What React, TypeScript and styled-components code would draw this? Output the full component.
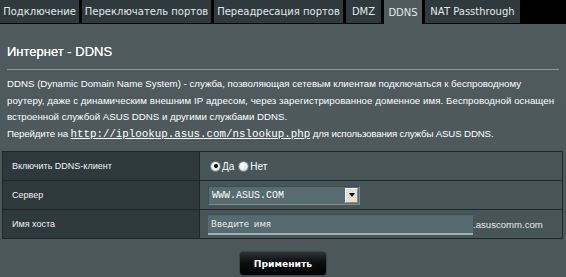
import styled, { createGlobalStyle } from "styled-components";

const GlobalStyle = createGlobalStyle`
    html, body {
        margin: 0;
        padding: 0;
        background: #4d595d;
    }
    * {
        box-sizing: border-box;
    }
`

const StyledPage = styled.div`
    width: 566px;
    height: 277px;
    overflow: hidden;
    background: linear-gradient(180deg, #4f5b5f 0%, #4b575b 100%);
    font-family: "Liberation Sans", Arial, sans-serif;
    color: #fff;
`

const StyledTabBar = styled.ul`
    display: flex;
    gap: 3px;
    height: 24px;
    margin: 0;
    padding: 0;
    list-style: none;
    background-color: #000;
`

const StyledTab = styled.li<{ $width: number; $active?: boolean }>`
    display: flex;
    align-items: center;
    justify-content: center;
    width: ${(p) => p.$width}px;
    height: ${(p) => (p.$active ? 24 : 23)}px;
    font-family: "DejaVu Sans", Verdana, sans-serif;
    font-size: 10px;
    color: #e4e8e9;
    background-color: ${(p) => (p.$active ? "#4f5b5f" : "#2f3a3e")};
    white-space: nowrap;
`

const StyledHeader = styled.div`
    padding: 20px 7px 0 7px;
`

const StyledTitle = styled.div`
    font-size: 13px;
    line-height: 16px;
    color: #fff;
    text-shadow: 0 0 0.3px #fff;
`

const StyledDivider = styled.div`
    height: 1px;
    margin: 9px 0 0 0;
    background-color: #8e999c;
`

const StyledDescription = styled.div`
    margin-top: 6px;
    font-size: 9.7px;
    line-height: 16.6px;
    color: #fff;
    white-space: nowrap;
`

const StyledLine = styled.div<{ $spacing?: number }>`
    letter-spacing: ${(p) => p.$spacing ?? 0}px;

    a {
        color: #fff;
        font-family: "Liberation Mono", "Courier New", monospace;
        font-size: 10.8px;
        letter-spacing: 0;
        text-decoration: underline;
    }
`

const StyledTable = styled.table`
    width: 561px;
    margin: 9px 0 0 2px;
    border-collapse: collapse;
    font-size: 9px;
`

const StyledRow = styled.tr`
    height: 29px;
`

const StyledLabel = styled.th`
    width: 197px;
    padding: 0 0 0 9px;
    text-align: left;
    font-weight: normal;
    color: #f2f2f2;
    background-color: #2e393d;
    border: 1px solid #1f2729;
`

const StyledValue = styled.td`
    padding: 0 0 0 8px;
    background-color: #475458;
    border: 1px solid #1f2729;
`

const StyledRadioGroup = styled.div`
    display: flex;
    align-items: center;
    padding-left: 3px;
    font-size: 10px;
`

const StyledRadio = styled.span<{ $checked?: boolean }>`
    position: relative;
    width: 9px;
    height: 9px;
    margin-right: 2px;
    border-radius: 50%;
    background: radial-gradient(circle at 40% 35%, #ffffff 0%, #e6e6e6 60%, #bdbdbd 100%);
    box-shadow: 0 0 0 1px #6e7b7f;

    &::after {
        content: "";
        display: ${(p) => (p.$checked ? "block" : "none")};
        position: absolute;
        left: 2.5px;
        top: 2.5px;
        width: 4px;
        height: 4px;
        border-radius: 50%;
        background-color: #000;
    }
`

const StyledRadioLabel = styled.span`
    margin-right: 5px;
`

const StyledSelect = styled.div`
    display: flex;
    align-items: center;
    justify-content: space-between;
    width: 152px;
    height: 19px;
    padding: 0 1px 0 3px;
    background-color: #576b71;
    border: 1px solid #7d8c90;
    border-top-color: #3e4c50;
    border-left-color: #3e4c50;
    font-family: "Liberation Mono", "Courier New", monospace;
    font-size: 10px;
    color: #fff;
`

const StyledSelectButton = styled.span`
    display: flex;
    align-items: center;
    justify-content: center;
    width: 13px;
    height: 15px;
    background-color: #e4e0d4;
    border: 1px solid #fff;
    border-right-color: #8d8a80;
    border-bottom-color: #8d8a80;

    &::after {
        content: "";
        border-left: 3px solid transparent;
        border-right: 3px solid transparent;
        border-top: 4px solid #000;
    }
`

const StyledHostWrap = styled.div`
    display: flex;
    align-items: center;
    font-size: 9.6px;
    color: #e8ecec;
`

const StyledInput = styled.div`
    display: flex;
    align-items: center;
    width: 265px;
    height: 21px;
    padding-left: 3px;
    background-color: #566b71;
    border-top: 1px solid #3c4a4e;
    border-bottom: 2px solid #a3afb2;
    font-family: "DejaVu Sans", Verdana, sans-serif;
    font-size: 8.6px;
    word-spacing: 2px;
    color: #e8ecec;
`

const StyledFooter = styled.div`
    display: flex;
    justify-content: center;
    margin-top: 12px;
`

const StyledButton = styled.button`
    width: 88px;
    height: 25px;
    border: 1px solid #3a4346;
    border-radius: 4px;
    background: linear-gradient(180deg, #2f3436 0%, #0c0e0f 45%, #000 100%);
    font-family: "DejaVu Sans", Verdana, sans-serif;
    font-size: 9.2px;
    font-weight: bold;
    color: #fff;
`

const tabs = [
    { label: "Подключение", width: 79 },
    { label: "Переключатель портов", width: 129 },
    { label: "Переадресация портов", width: 129 },
    { label: "DMZ", width: 35 },
    { label: "DDNS", width: 38, active: true },
    { label: "NAT Passthrough", width: 95 },
];

const App = () => {
    return (
        <StyledPage>
            <GlobalStyle />
            <StyledTabBar>
                {tabs.map((t) => (
                    <StyledTab key={t.label} $width={t.width} $active={t.active}>
                        {t.label}
                    </StyledTab>
                ))}
            </StyledTabBar>
            <StyledHeader>
                <StyledTitle>Интернет - DDNS</StyledTitle>
                <StyledDivider />
                <StyledDescription>
                    <StyledLine>
                        DDNS (Dynamic Domain Name System) - служба, позволяющая сетевым клиентам подключаться к беспроводному
                    </StyledLine>
                    <StyledLine $spacing={0.06}>
                        роутеру, даже с динамическим внешним IP адресом, через зарегистрированное доменное имя. Беспроводной оснащен
                    </StyledLine>
                    <StyledLine>встроенной службой ASUS DDNS и другими службами DDNS.</StyledLine>
                    <StyledLine $spacing={-0.15}>
                        Перейдите на <a href="#">http://iplookup.asus.com/nslookup.php</a> для использования службы ASUS DDNS.
                    </StyledLine>
                </StyledDescription>
            </StyledHeader>
            <StyledTable>
                <tbody>
                    <StyledRow>
                        <StyledLabel>Включить DDNS-клиент</StyledLabel>
                        <StyledValue>
                            <StyledRadioGroup>
                                <StyledRadio $checked />
                                <StyledRadioLabel>Да</StyledRadioLabel>
                                <StyledRadio />
                                <StyledRadioLabel>Нет</StyledRadioLabel>
                            </StyledRadioGroup>
                        </StyledValue>
                    </StyledRow>
                    <StyledRow>
                        <StyledLabel>Сервер</StyledLabel>
                        <StyledValue>
                            <StyledSelect>
                                WWW.ASUS.COM
                                <StyledSelectButton />
                            </StyledSelect>
                        </StyledValue>
                    </StyledRow>
                    <StyledRow>
                        <StyledLabel>Имя хоста</StyledLabel>
                        <StyledValue>
                            <StyledHostWrap>
                                <StyledInput>Введите имя</StyledInput>
                                .asuscomm.com
                            </StyledHostWrap>
                        </StyledValue>
                    </StyledRow>
                </tbody>
            </StyledTable>
            <StyledFooter>
                <StyledButton>Применить</StyledButton>
            </StyledFooter>
        </StyledPage>
    );
};

export default App;
